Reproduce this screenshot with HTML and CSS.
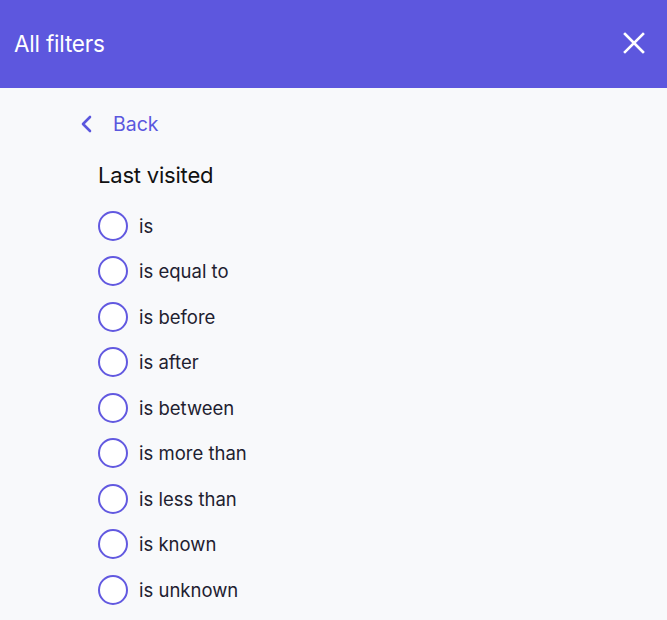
FILE: index.html
```html
<!DOCTYPE html>
<html>
<head>
<meta charset="utf-8">
<link rel="stylesheet" href="styles.css">
</head>
<body>
<header class="topbar">
  <h1 class="title">All filters</h1>
  <button class="close" aria-label="Close">
    <svg width="24" height="24" viewBox="0 0 24 24"><path d="M3 3 L21 21 M21 3 L3 21" stroke="#fff" stroke-width="2.6" stroke-linecap="square" fill="none"/></svg>
  </button>
</header>
<main class="content">
  <a class="back" href="#">
    <svg width="12" height="18" viewBox="0 0 12 18"><path d="M10 2 L3 9 L10 16" stroke="#5b57de" stroke-width="2.6" fill="none" stroke-linecap="round" stroke-linejoin="round"/></svg>
    <span>Back</span>
  </a>
  <div class="group">
    <h2 class="heading">Last visited</h2>
    <ul class="options">
      <li class="option"><span class="radio"></span><span>is</span></li>
      <li class="option"><span class="radio"></span><span>is equal to</span></li>
      <li class="option"><span class="radio"></span><span>is before</span></li>
      <li class="option"><span class="radio"></span><span>is after</span></li>
      <li class="option"><span class="radio"></span><span>is between</span></li>
      <li class="option"><span class="radio"></span><span>is more than</span></li>
      <li class="option"><span class="radio"></span><span>is less than</span></li>
      <li class="option"><span class="radio"></span><span>is known</span></li>
      <li class="option"><span class="radio"></span><span>is unknown</span></li>
    </ul>
  </div>
</main>
</body>
</html>
```
FILE: styles.css
```css
* { box-sizing: border-box; }
html, body { margin: 0; padding: 0; }
body {
  background: #f8f9fb;
  font-family: "Inter", "Lato", sans-serif;
  width: 667px;
  height: 620px;
  overflow: hidden;
}
.topbar {
  height: 88px;
  background: #5d57de;
  display: flex;
  align-items: center;
  justify-content: space-between;
  padding: 0 14px 2px 14px;
}
.title {
  margin: 0;
  color: #fff;
  font-weight: 400;
  font-size: 22.5px;
  letter-spacing: -0.2px;
}
.close {
  background: none;
  border: none;
  padding: 0;
  width: 40px;
  height: 40px;
  border-radius: 50%;
  display: flex;
  align-items: center;
  justify-content: center;
  margin-right: -1px;
}
.content {
  padding: 24px 0 0 80px;
}
.back {
  display: flex;
  align-items: center;
  gap: 21px;
  color: #5b57de;
  text-decoration: none;
  font-size: 19.5px;
  height: 24px;
}
.group {
  padding-left: 18px;
  padding-top: 25px;
}
.heading {
  margin: 0 0 14px 0;
  font-weight: 400;
  font-size: 22px;
  color: #111;
  line-height: 28px;
  letter-spacing: -0.2px;
}
.options {
  list-style: none;
  margin: 0;
  padding: 0;
}
.option {
  display: flex;
  align-items: center;
  gap: 11px;
  height: 45.5px;
  font-size: 18.5px;
  color: #1e2130;
}
.radio {
  width: 30px;
  height: 30px;
  border: 2.5px solid #6259e0;
  border-radius: 50%;
  background: #fff;
  flex: none;
}
```
